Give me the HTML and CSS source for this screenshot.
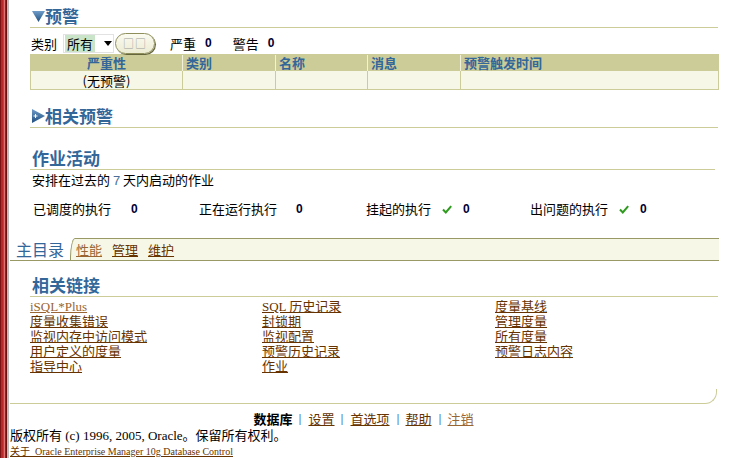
FILE: index.html
```html
<!DOCTYPE html>
<html lang="zh-CN">
<head>
<meta charset="utf-8">
<title>数据库</title>
<link rel="stylesheet" href="styles.css">
</head>
<body>
<div class="rail"></div>
<div class="main">
  <div class="panel">
    <h2 class="hd hd-first"><svg class="ico" width="13" height="12" viewBox="0 0 13 12"><defs><linearGradient id="g1" x1="0" y1="0" x2="0" y2="1"><stop offset="0" stop-color="#6f9cc9"/><stop offset="1" stop-color="#1f4f80"/></linearGradient></defs><polygon points="0,1 13,1 6.5,12" fill="url(#g1)"/></svg>预警</h2>
    <div class="filter">
      <span class="lbl">类别</span>
      <span class="select"><span class="opt">所有</span><span class="arrow"></span></span>
      <span class="btn">□□</span>
      <span class="lbl sev">严重</span><b class="val">0</b>
      <span class="lbl warn">警告</span><b class="val">0</b>
    </div>
    <table class="alerts">
      <colgroup><col class="c1"><col class="c2"><col class="c3"><col class="c4"><col></colgroup>
      <thead>
        <tr><th class="center">严重性</th><th>类别</th><th>名称</th><th>消息</th><th>预警触发时间</th></tr>
      </thead>
      <tbody>
        <tr><td class="center">(无预警)</td><td></td><td></td><td></td><td></td></tr>
      </tbody>
    </table>
    <h2 class="hd hd-rel"><svg class="ico" width="13" height="14" viewBox="0 0 13 14"><defs><linearGradient id="g2" x1="0" y1="0" x2="0" y2="1"><stop offset="0" stop-color="#6f9cc9"/><stop offset="1" stop-color="#1f4f80"/></linearGradient></defs><polygon points="0,0 13,7 0,14" fill="url(#g2)"/><path d="M1.5 7H5.5M3.5 5V9" stroke="#fff" stroke-width="1"/></svg>相关预警</h2>
    <h2 class="hd hd-jobs">作业活动</h2>
    <p class="note">安排在过去的 <span class="num">7</span> 天内启动的作业</p>
    <div class="stats">
      <div class="stat"><span>已调度的执行</span><b class="val v1">0</b></div>
      <div class="stat"><span>正在运行执行</span><b class="val v2">0</b></div>
      <div class="stat"><span>挂起的执行</span><svg class="chk" width="10" height="9" viewBox="0 0 10 9"><path d="M1 4.5L3.8 7.5L9.2 1.2" fill="none" stroke="#2e9a1e" stroke-width="2"/></svg><b class="val v3">0</b></div>
      <div class="stat"><span>出问题的执行</span><svg class="chk" width="10" height="9" viewBox="0 0 10 9"><path d="M1 4.5L3.8 7.5L9.2 1.2" fill="none" stroke="#2e9a1e" stroke-width="2"/></svg><b class="val v3">0</b></div>
    </div>
    <div class="tabbar">
      <span class="tab-cur">主目录</span>
      <div class="tab-rest">
        <a class="tab visited" href="#">性能</a>
        <a class="tab" href="#">管理</a>
        <a class="tab" href="#">维护</a>
      </div>
    </div>
    <h2 class="hd hd-links">相关链接</h2>
    <div class="links">
      <div class="col col1">
        <a href="#" class="visited">iSQL*Plus</a>
        <a href="#">度量收集错误</a>
        <a href="#">监视内存中访问模式</a>
        <a href="#">用户定义的度量</a>
        <a href="#">指导中心</a>
      </div>
      <div class="col col2">
        <a href="#">SQL 历史记录</a>
        <a href="#">封锁期</a>
        <a href="#">监视配置</a>
        <a href="#">预警历史记录</a>
        <a href="#">作业</a>
      </div>
      <div class="col">
        <a href="#">度量基线</a>
        <a href="#">管理度量</a>
        <a href="#">所有度量</a>
        <a href="#">预警日志内容</a>
      </div>
    </div>
    <div class="corner"></div>
  </div>
  <div class="footnav">
    <b>数据库</b><span class="sep"></span><a href="#">设置</a><span class="sep"></span><a href="#">首选项</a><span class="sep"></span><a href="#">帮助</a><span class="sep"></span><a href="#" class="visited">注销</a>
  </div>
  <p class="copy">版权所有 (c) 1996, 2005, Oracle。保留所有权利。</p>
  <a class="about" href="#">关于&nbsp; Oracle Enterprise Manager 10g Database Control</a>
</div>
</body>
</html>
```
FILE: styles.css
```css
html, body {
  margin: 0;
  padding: 0;
}
body {
  display: flex;
  min-height: 458px;
  background: #ffffff;
  color: #000000;
  font-family: "Liberation Serif", "Noto Sans CJK SC", serif;
  font-size: 13px;
}
.rail {
  flex: none;
  width: 7px;
  border-right: 2px solid #bdbdbd;
  background: linear-gradient(to right,
    #7a1414 0, #7a1414 1px,
    #b82828 1px, #b82828 3px,
    #cf3b3b 3px, #cf3b3b 4px,
    #e07272 4px, #e07272 5px,
    #a01c1c 5px, #a01c1c 6px,
    #6b0f0f 6px, #6b0f0f 7px);
}
.main {
  flex: 1;
  padding-left: 1px;
}
.panel {
  width: 707px;
}
a {
  color: #663300;
  text-decoration: underline;
}
a.visited {
  color: #996633;
}

/* headings */
.hd {
  display: flex;
  align-items: center;
  margin: 0 -1px 0 20px;
  padding: 0 0 1px 2px;
  height: 20px;
  line-height: 20px;
  font-family: "Noto Sans CJK SC", sans-serif;
  font-size: 17px;
  font-weight: bold;
  color: #336699;
  border-bottom: 1px solid #cccc99;
}
.hd .ico {
  flex: none;
}
.hd-first { margin-top: 6px; }
.hd-rel { margin-top: 16px; }
.hd-jobs { margin-top: 20px; margin-right: 2px; }
.hd-links { margin-top: 14px; }

/* filter row */
.filter {
  display: flex;
  align-items: center;
  height: 22px;
  margin: 4px 0 0 21px;
  font-family: "Noto Sans CJK SC", sans-serif;
  font-size: 13px;
}
.select {
  display: flex;
  align-items: center;
  width: 49px;
  height: 17px;
  margin-left: 6px;
  border: 1px solid #e2e2e2;
  background: #ffffff;
}
.opt {
  background: #c9e4c9;
  padding: 0 2px;
  line-height: 17px;
  margin-left: 1px;
}
.arrow {
  width: 0;
  height: 0;
  margin-left: 9px;
  border-left: 4px solid transparent;
  border-right: 4px solid transparent;
  border-top: 5px solid #000000;
}
.btn {
  width: 38px;
  height: 19px;
  margin-left: 1px;
  border: 1px solid #8f8f5c;
  border-radius: 11px;
  background: linear-gradient(#fbfbf0, #ecebd3);
  box-shadow: 1px 1px 0 #66663d;
  color: #a0a0a0;
  font-size: 11px;
  text-align: center;
  line-height: 19px;
  letter-spacing: 1px;
}
.sev { margin-left: 15px; }
.warn { margin-left: 21px; }
.val {
  font-family: "Liberation Sans", sans-serif;
  font-weight: bold;
  font-size: 12px;
  color: #000033;
  margin-left: 9px;
}

/* alerts table */
.alerts {
  margin-left: 20px;
  width: 689px;
  border-collapse: separate;
  border-spacing: 0;
  border: 1px solid #cccc99;
  table-layout: fixed;
  font-family: "Noto Sans CJK SC", sans-serif;
  font-size: 13px;
}
.alerts .c1 { width: 151px; }
.alerts .c2 { width: 93px; }
.alerts .c3 { width: 92px; }
.alerts .c4 { width: 93px; }
.alerts th {
  background: #cccc99;
  color: #336699;
  font-weight: bold;
  text-align: left;
  padding: 0 3px;
  height: 16px;
  line-height: 15px;
  vertical-align: top;
  border-left: 1px solid #f2f2dc;
}
.alerts th:first-child,
.alerts td:first-child {
  border-left: none;
}
.alerts td {
  background: #f7f7e7;
  padding: 2px 3px 0;
  height: 16px;
  line-height: 16px;
  border-left: 1px solid #cccc99;
}
.alerts .center {
  text-align: center;
}

/* job activity */
.note {
  margin: 0 0 0 22px;
  line-height: 20px;
  font-family: "Noto Sans CJK SC", sans-serif;
}
.num {
  font-family: "Liberation Sans", sans-serif;
  color: #4a6f99;
}
.stats {
  display: grid;
  grid-template-columns: 166px 167px 164px auto;
  margin: 8px 0 0 23px;
  line-height: 20px;
  font-family: "Noto Sans CJK SC", sans-serif;
}
.stat {
  display: flex;
  align-items: center;
}
.stat .v1 { margin-left: 20px; }
.stat .v2 { margin-left: 19px; }
.stat .v3 { margin-left: 11px; }
.chk {
  margin-left: 11px;
}

/* tabs */
.tabbar {
  display: flex;
  height: 22px;
  margin: 19px -2px 0 0;
  border-bottom: 1px solid #999966;
}
.tab-cur {
  padding: 0 6px;
  line-height: 22px;
  font-family: "Noto Sans CJK SC", sans-serif;
  font-size: 16px;
  color: #336699;
}
.tab-rest {
  flex: 1;
  display: flex;
  align-items: center;
  gap: 10px;
  padding-left: 5px;
  background: #f7f7e7;
  border-top: 1px solid #999966;
  border-left: 1px solid #999966;
  border-top-left-radius: 5px 21px;
  font-family: "Noto Sans CJK SC", sans-serif;
  font-size: 13px;
}

/* related links */
.links {
  display: flex;
  margin: 0 0 0 20px;
  padding-top: 2px;
  line-height: 15px;
  font-family: "Liberation Serif", "Noto Sans CJK SC", serif;
  font-size: 13px;
}
.col {
  display: flex;
  flex-direction: column;
  align-items: flex-start;
}
.col1 { width: 232px; }
.col2 { width: 233px; }
.corner {
  margin-top: 15px;
  height: 14px;
  border-right: 1px solid #cccc99;
  border-bottom: 1px solid #cccc99;
  border-bottom-right-radius: 12px;
}

/* footer */
.footnav {
  width: 707px;
  margin-top: 5px;
  text-align: center;
  line-height: 20px;
  font-family: "Noto Sans CJK SC", sans-serif;
  font-size: 13px;
}
.footnav b {
  font-weight: bold;
}
.sep {
  display: inline-block;
  width: 0;
  height: 11px;
  margin: 0 7px;
  vertical-align: -1px;
  border-left: 1px solid #ffb77a;
  border-right: 1px solid #7fc3ef;
}
.copy {
  margin: 0;
  line-height: 14px;
  font-size: 13px;
}
.about {
  display: inline-block;
  line-height: 11px;
  font-size: 10px;
}
```
